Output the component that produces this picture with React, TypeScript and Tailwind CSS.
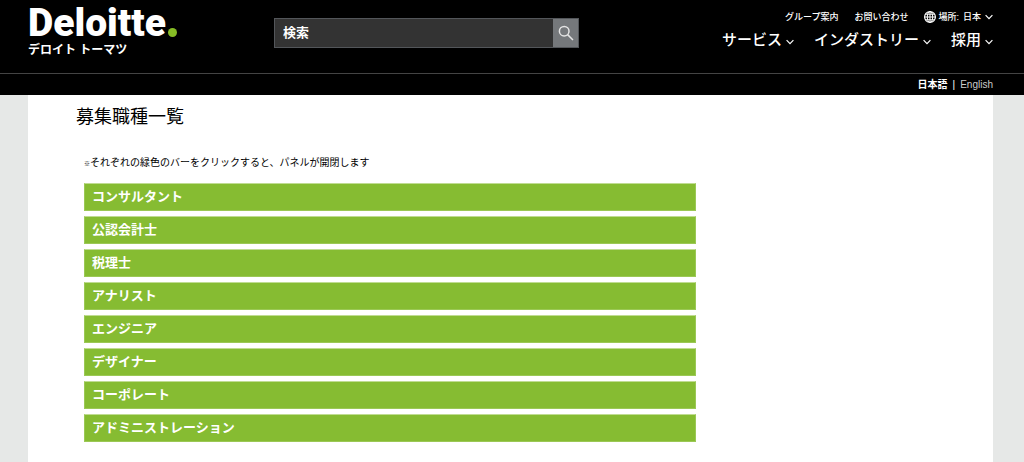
import { useState } from "react";

const jobs = [
  "コンサルタント",
  "公認会計士",
  "税理士",
  "アナリスト",
  "エンジニア",
  "デザイナー",
  "コーポレート",
  "アドミニストレーション",
];

const menus = ["サービス", "インダストリー", "採用"];

function Chevron() {
  return (
    <svg width="8" height="6" viewBox="0 0 8 6" fill="none" stroke="currentColor" strokeWidth="1.2" aria-hidden="true">
      <path d="M0.6 1.2 L4 4.6 L7.4 1.2" />
    </svg>
  );
}

function Globe() {
  return (
    <svg width="12" height="12" viewBox="0 0 12 12" fill="none" stroke="currentColor" strokeWidth="1" aria-hidden="true">
      <circle cx="6" cy="6" r="5.4" strokeWidth="1.2" />
      <ellipse cx="6" cy="6" rx="2.7" ry="5.4" />
      <path d="M6 0.6V11.4M0.6 6H11.4M1.4 3.2H10.6M1.4 8.8H10.6" />
    </svg>
  );
}

function Logo() {
  return (
    <a href="#" className="block">
      <span className="flex items-end gap-0.5 font-[Roboto,sans-serif] text-[39px] leading-[46px] font-black">
        Deloitte
        <span className="mb-[9px] h-[9px] w-[9px] rounded-full bg-[#86bc25]" />
      </span>
      <span className="-mt-1 block text-[12px] leading-4 font-bold">デロイト トーマツ</span>
    </a>
  );
}

function Header() {
  return (
    <header className="bg-black text-white">
      <div className="flex h-[73px] items-start pr-[31px] pl-7">
        <div className="w-[246px] shrink-0">
          <Logo />
        </div>
        <form className="mt-[18px] flex h-[30px] w-[305px] border border-[#53565a] bg-[#333]">
          <input
            type="text"
            aria-label="検索"
            placeholder="検索"
            className="min-w-0 flex-1 px-2 text-[13px] font-bold outline-none placeholder:text-white"
          />
          <button type="button" aria-label="検索する" className="flex w-[25px] items-center justify-center bg-[#75787b]">
            <svg width="16" height="16" viewBox="0 0 16 16" fill="none" stroke="#e4e4e4" strokeWidth="1.5">
              <circle cx="6.2" cy="6.2" r="4.8" />
              <path d="M9.6 9.6 L15 15" />
            </svg>
          </button>
        </form>
        <nav className="ml-auto flex flex-col items-end pt-2.5">
          <div className="flex gap-4 text-[9px] leading-[14px] font-medium">
            <a href="#">グループ案内</a>
            <a href="#">お問い合わせ</a>
            <button type="button" className="flex items-center gap-1">
              <span className="flex items-center gap-0.5">
                <Globe />
                場所:
              </span>
              日本
              <Chevron />
            </button>
          </div>
          <div className="mt-1 flex gap-5 text-[15px] leading-6 font-medium">
            {menus.map((menu) => (
              <button type="button" key={menu} className="flex items-center gap-1">
                {menu}
                <span className="pt-1">
                  <Chevron />
                </span>
              </button>
            ))}
          </div>
        </nav>
      </div>
      <div className="flex h-[22px] items-center justify-end gap-[5px] border-t border-[#444] pr-[31px] text-[10px]">
        <a href="#" className="font-bold">日本語</a>
        <span>|</span>
        <a href="#" className="text-[#ccc]">English</a>
      </div>
    </header>
  );
}

export default function App() {
  const [selected, setSelected] = useState("");

  return (
    <div className="flex min-h-screen flex-col bg-[#e6e8e7] font-['Liberation_Sans','Noto_Sans_CJK_JP',sans-serif]">
      <Header />
      <main className="mr-[31px] ml-7 flex-1 bg-white px-12 pb-5 text-black">
        <h1 className="pt-2 text-[18px] leading-7">募集職種一覧</h1>
        <div className="max-w-[620px] pl-2">
          <p className="mt-6 text-[10px] leading-4">
            <span className="text-[6px] leading-none font-bold">※</span>それぞれの緑色のバーをクリックすると、パネルが開閉します
          </p>
          <ul className="mt-3 flex flex-col gap-[5px]">
            {jobs.map((job) => (
              <li key={job}>
                <button
                  type="button"
                  aria-pressed={selected === job}
                  onClick={() => setSelected(selected === job ? "" : job)}
                  className="block h-7 w-full border border-[#9bc855] border-t-[#c0dc92] bg-[#86bc32] px-[7px] text-left text-[13px] leading-6 font-bold text-white"
                >
                  {job}
                </button>
              </li>
            ))}
          </ul>
        </div>
      </main>
    </div>
  );
}
